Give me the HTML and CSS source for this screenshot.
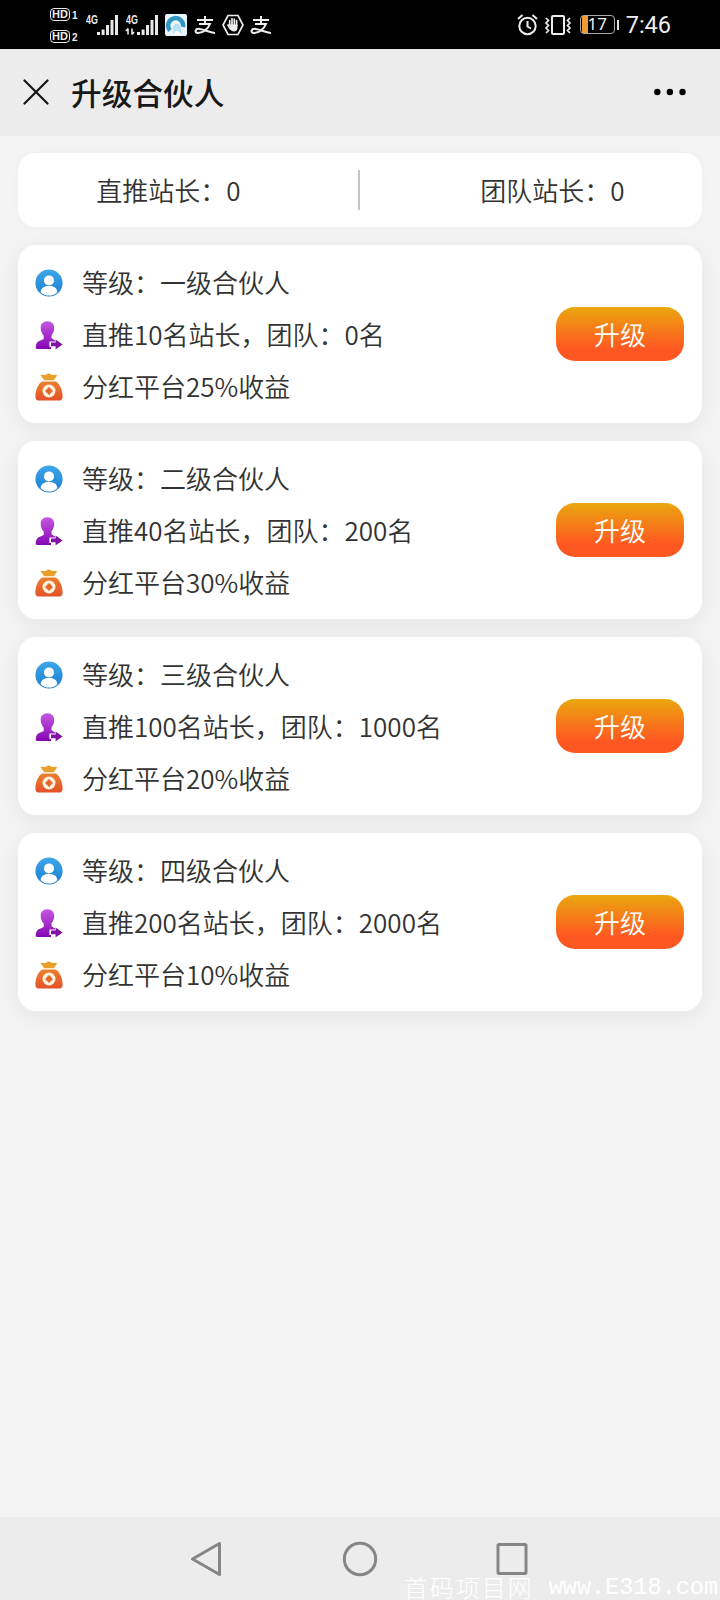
FILE: index.html
```html
<!DOCTYPE html>
<html lang="zh-CN">
<head>
<meta charset="utf-8">
<title>升级合伙人</title>
<link rel="stylesheet" href="styles.css">
</head>
<body>
<svg class="defs" width="0" height="0">
  <defs>
    <linearGradient id="blue" x1="0" y1="0" x2="0" y2="1"><stop offset="0" stop-color="#3ea6ea"/><stop offset="1" stop-color="#1c7fd0"/></linearGradient>
    <linearGradient id="purple" x1="0" y1="0" x2="0" y2="1"><stop offset="0" stop-color="#c558e0"/><stop offset="1" stop-color="#8606b4"/></linearGradient>
    <linearGradient id="orange" x1="0" y1="0" x2="0" y2="1"><stop offset="0" stop-color="#ea8030"/><stop offset="1" stop-color="#e4512a"/></linearGradient>
    <symbol id="user" viewBox="0 0 28 28">
      <circle cx="14" cy="14" r="13.600" fill="url(#blue)"/>
      <circle cx="14" cy="11.400" r="5" fill="#fff"/>
      <path d="M5.600 23C6.300 18.400 9.700 17 14 17s7.700 1.400 8.400 6C20 25.600 17.200 26.600 14 26.600s-6-1-8.400-3.600z" fill="#fff"/>
    </symbol>
    <symbol id="invite" viewBox="0 0 28 28">
      <path d="M12.400.2c4.500 0 7 3 6.800 7.200-.2 3.200-1.500 5.200-2.700 6.800v3l3.500 2.200v1h-5.600v5.600h1.600v2H2.200c-1.400 0-1.600-1.200-1.400-2.400.4-3.600 1.800-5 4.600-6l3.300-1.600v-3.200C7.300 12.600 5.900 10.600 5.700 7.400 5.500 3.200 7.900.2 12.400.2z" fill="url(#purple)"/>
      <path d="M16 21.600h4.600v-3.200l7 5-7 5v-3.200H16z" fill="#8012a4"/>
    </symbol>
    <symbol id="bag" viewBox="0 0 28 28">
      <path d="M5.600 2.200C8.500.8 10 2.600 11 1.800 12.800.2 14.800.2 16.600 1.800c1 .8 2.500-1 5.600.4L18.800 7.200H9.200z" fill="#e9a02b"/>
      <path d="M7.400 8.600h13.200C25.400 11 27.600 18.400 27.600 23.400c0 3-1.400 4.200-4.200 4.200H4.600c-2.800 0-4.200-1.200-4.200-4.200 0-5 2.200-12.400 7-14.800z" fill="url(#orange)"/>
      <circle cx="14" cy="18" r="6.500" fill="#fff3df"/>
      <path d="M14 14l4 4-4 4-4-4z" fill="#e4682b"/>
    </symbol>
  </defs>
</svg>
<div class="screen">
  <div class="status">
    <div class="hd">
      <div class="hd-row"><span class="hd-box">HD</span><span class="hd-num">1</span></div>
      <div class="hd-row"><span class="hd-box">HD</span><span class="hd-num">2</span></div>
    </div>
    <div class="signal">
      <span class="gen">4G</span>
      <svg width="34" height="22" viewBox="0 0 34 22" fill="#e8e8e8"><path d="M12 18h3v3h-3zM16.600 15.500h3V21h-3zM21 11h3v10h-3zM25.500 6h3v15h-3zM30 1h3v20h-3z"/></svg>
    </div>
    <div class="signal">
      <span class="gen">4G</span>
      <svg width="34" height="22" viewBox="0 0 34 22" fill="#e8e8e8"><path d="M12 18h3v3h-3zM16.600 15.500h3V21h-3zM21 11h3v10h-3zM25.500 6h3v15h-3zM30 1h3v20h-3z"/><path d="M3 14.500v6M1 17l2-2.500M7 14.500v6M9 18l-2 2.500" stroke="#e8e8e8" stroke-width="1.600"/></svg>
    </div>
    <svg class="app" width="22" height="22" viewBox="0 0 22 22"><rect width="22" height="22" rx="2" fill="#e9f6fc"/><path d="M5 16.500A7.500 7.500 0 1 1 18 13" fill="none" stroke="#3396c2" stroke-width="4.500"/><path d="M8 12.500a4 4 0 0 1 7-1l2 8H8z" fill="#b5e1f2"/><path d="M9 21c1-6 4-5 7-1" fill="#fff"/></svg>
    <svg class="pay" width="22" height="20" viewBox="0 0 22 20" fill="none" stroke="#eee" stroke-width="2"><path d="M3 5h16M11 1v8M5 9h11C14 14 9 18 4 18c-4 0-3-5 2-4 5 .8 9 3.500 15 4"/></svg>
    <svg class="hand" width="22" height="22" viewBox="0 0 22 22"><path d="M6 1.500h10l5 9.500-5 9.500H6L1 11z" fill="none" stroke="#eee" stroke-width="1.700"/><path d="M7.700 12V6.500M10 11V4.800M12.300 11V5M14.600 12V6.500M6 11l2.500 4" stroke="#eee" stroke-width="1.700" stroke-linecap="round"/><path d="M7 10.500h8.500V14c0 2-1.500 3.500-3.500 3.500-3 0-5-3-5-7z" fill="#eee"/></svg>
    <svg class="pay" width="22" height="20" viewBox="0 0 22 20" fill="none" stroke="#eee" stroke-width="2"><path d="M3 5h16M11 1v8M5 9h11C14 14 9 18 4 18c-4 0-3-5 2-4 5 .8 9 3.500 15 4"/></svg>
    <div class="status-right">
      <svg width="21" height="22" viewBox="0 0 21 22" fill="none" stroke="#eee" stroke-width="2"><circle cx="10.500" cy="12" r="8.200"/><path d="M10.500 7v5.500l3.500 2M1 5l4.500-4M20 5l-4.500-4"/></svg>
      <svg width="28" height="22" viewBox="0 0 28 22" fill="none" stroke="#eee" stroke-width="2"><rect x="8" y="2" width="12" height="18" rx="1"/><path d="M2 4l2.500 2.500L2 9l2.500 2.500L2 14l2.500 2.500L2 19M26 4l-2.500 2.500L26 9l-2.500 2.500L26 14l-2.500 2.500L26 19" stroke-width="1.700"/></svg>
      <div class="battery">17</div>
      <span class="battery-tip"></span>
      <span class="clock">7:46</span>
    </div>
  </div>

  <header class="titlebar">
    <svg width="26" height="26" viewBox="0 0 26 26" stroke="#151515" stroke-width="2.200" stroke-linecap="round"><path d="M1.500 1.500l23 23M24.500 1.500l-23 23"/></svg>
    <h1 class="title">升级合伙人</h1>
    <svg class="more" width="32" height="8" viewBox="0 0 32 8"><circle cx="3.300" cy="4" r="3.200"/><circle cx="15.900" cy="4" r="3.200"/><circle cx="28.500" cy="4" r="3.200"/></svg>
  </header>

  <main class="content">
    <section class="stats">
      <div class="stat">直推站长：0</div>
      <div class="divider"></div>
      <div class="stat">团队站长：0</div>
    </section>
    <section class="card">
      <div class="rows">
        <div class="row"><svg class="icon"><use href="#user"/></svg>等级：一级合伙人</div>
        <div class="row"><svg class="icon"><use href="#invite"/></svg>直推10名站长，团队：0名</div>
        <div class="row"><svg class="icon"><use href="#bag"/></svg>分红平台25%收益</div>
      </div>
      <button class="upgrade">升级</button>
    </section>
    <section class="card">
      <div class="rows">
        <div class="row"><svg class="icon"><use href="#user"/></svg>等级：二级合伙人</div>
        <div class="row"><svg class="icon"><use href="#invite"/></svg>直推40名站长，团队：200名</div>
        <div class="row"><svg class="icon"><use href="#bag"/></svg>分红平台30%收益</div>
      </div>
      <button class="upgrade">升级</button>
    </section>
    <section class="card">
      <div class="rows">
        <div class="row"><svg class="icon"><use href="#user"/></svg>等级：三级合伙人</div>
        <div class="row"><svg class="icon"><use href="#invite"/></svg>直推100名站长，团队：1000名</div>
        <div class="row"><svg class="icon"><use href="#bag"/></svg>分红平台20%收益</div>
      </div>
      <button class="upgrade">升级</button>
    </section>
    <section class="card">
      <div class="rows">
        <div class="row"><svg class="icon"><use href="#user"/></svg>等级：四级合伙人</div>
        <div class="row"><svg class="icon"><use href="#invite"/></svg>直推200名站长，团队：2000名</div>
        <div class="row"><svg class="icon"><use href="#bag"/></svg>分红平台10%收益</div>
      </div>
      <button class="upgrade">升级</button>
    </section>
  </main>

  <nav class="navbar">
    <svg width="34" height="36" viewBox="0 0 34 36"><path d="M28.500 2.500v31L1.500 18z"/></svg>
    <svg width="36" height="36" viewBox="0 0 36 36"><circle cx="18" cy="18" r="15.700"/></svg>
    <svg width="34" height="36" viewBox="0 0 34 36"><rect x="3" y="3.500" width="28" height="29" rx="1"/></svg>
    <div class="watermark"><span class="mark-name">首码项目网</span><span class="mark-url">www.E318.com</span></div>
  </nav>
</div>
</body>
</html>
```
FILE: styles.css
```css
* { box-sizing: border-box; }
body {
  margin: 0;
  background: #f3f3f3;
  color: #333;
  font-family: "Noto Sans CJK SC", sans-serif;
}
.defs { position: absolute; }
.screen {
  width: 720px;
  height: 1600px;
  display: flex;
  flex-direction: column;
  overflow: hidden;
}

/* Status bar */
.status {
  height: 49px;
  flex: none;
  display: flex;
  align-items: center;
  padding: 0 49px 0 50px;
  background: #000;
  color: #eee;
}
.hd { display: flex; flex-direction: column; gap: 9px; width: 35px; padding-top: 1px; }
.hd-row { display: flex; align-items: flex-end; gap: 2px; height: 13px; }
.hd-box {
  width: 20px;
  height: 13px;
  border: 1.500px solid #e8e8e8;
  border-radius: 4px;
  font: bold 11px/10px "Liberation Sans", sans-serif;
  text-align: center;
}
.hd-num { font: bold 10px/10px "Liberation Sans", sans-serif; }
.signal { display: flex; position: relative; width: 34px; margin-right: 6px; }
.gen {
  position: absolute;
  left: 1px;
  top: -1px;
  font: bold 13px/13px "Liberation Sans", sans-serif;
  transform: scaleX(.68);
  transform-origin: left;
}
.app { margin-right: 7px; }
.pay { margin: 0 6px 0 0; }
.hand { margin: 1px 6px 0 0; }
.status-right { display: flex; align-items: center; margin-left: auto; }
.status-right svg { margin-right: 7px; }
.status-right svg + svg { margin-right: 8px; margin-left: -1px; }
.battery {
  width: 35px;
  height: 19px;
  border: 1.500px solid #aaa;
  border-radius: 4px;
  background: linear-gradient(90deg, transparent 1px, #f39a31 1px 7px, transparent 7px);
  font: 17px/16px "Noto Sans", sans-serif;
  text-align: center;
}
.battery-tip { width: 2px; height: 10px; margin: 0 7px 0 2px; background: #ddd; }
.clock { font: 23.500px/28px Roboto, sans-serif; }

/* Title bar */
.titlebar {
  height: 87px;
  flex: none;
  display: flex;
  align-items: center;
  padding: 0 34px 2px 23px;
  background: #ececec;
}
.title {
  margin: 0 0 0 22px;
  color: #181818;
  font-size: 30.700px;
  line-height: 40px;
  font-weight: 500;
}
.more { margin-left: auto; }

/* Content */
.content {
  flex: 1;
  display: flex;
  flex-direction: column;
  gap: 18px;
  padding: 17px 18px 0;
  font-size: 26px;
  font-weight: 350;
}
.stats {
  display: grid;
  grid-template-columns: 301px 80px 1fr;
  align-items: center;
  justify-items: center;
  height: 74px;
  border-radius: 18px;
  background: #fff;
  box-shadow: 0 0 14px rgba(0, 0, 0, .02);
}
.stat { line-height: 38px; }
.stat:last-child { padding-left: 4px; }
.divider { width: 2px; height: 40px; background: #c4c4c4; }
.card {
  display: flex;
  align-items: center;
  justify-content: space-between;
  height: 178px;
  padding: 0 18px 0 18px;
  border-radius: 18px;
  background: #fff;
  box-shadow: 0 5px 22px rgba(0, 0, 0, .06);
}
.rows { padding-bottom: 2px; }
.row {
  display: flex;
  align-items: center;
  gap: 19px;
  height: 52px;
  white-space: nowrap;
}
.icon { width: 28px; height: 28px; margin: 3px 0 0 -1px; }
.upgrade {
  width: 128px;
  height: 54px;
  padding: 0;
  border: 0;
  border-radius: 19px;
  background: linear-gradient(#eba60e, #ff5722 78%);
  color: #fff;
  font: 350 26px/54px "Noto Sans CJK SC", sans-serif;
}

/* System navigation */
.navbar {
  position: relative;
  height: 83px;
  flex: none;
  display: flex;
  align-items: center;
  justify-content: center;
  gap: 117px;
  background: #ececec;
}
.navbar svg { fill: none; stroke: #858585; stroke-width: 3; stroke-linejoin: round; }
.watermark {
  position: absolute;
  right: 2px;
  bottom: 0;
  display: flex;
  align-items: center;
  gap: 15px;
  height: 27px;
  color: #fff;
  white-space: nowrap;
}
.mark-name { font-size: 24px; line-height: 26px; font-weight: 300; letter-spacing: 2px; }
.mark-url { padding-top: 2px; font: 23.500px/25px "Liberation Mono", monospace; }
```
